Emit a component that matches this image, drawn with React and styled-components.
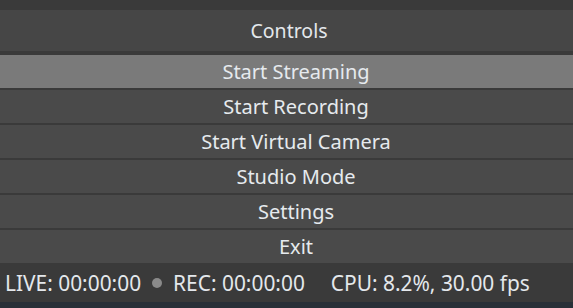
import styled, { createGlobalStyle } from "styled-components";

const GlobalStyle = createGlobalStyle`
  html, body {
    margin: 0;
    padding: 0;
    background: #3a3a3a;
  }
  body {
    font-family: "Noto Sans", "Open Sans", sans-serif;
    color: #e4e8ec;
  }
`;

const Dock = styled.div`
  width: 573px;
  height: 308px;
  display: flex;
  flex-direction: column;
  background: #3a3a3a;
  overflow: hidden;
`;

const TopBand = styled.div`
  height: 10px;
  background: #3a3a3a;
`;

const Title = styled.div`
  height: 41px;
  display: flex;
  align-items: center;
  justify-content: center;
  padding-left: 5px;
  background: #464646;
  font-size: 19.5px;
  margin-bottom: 4px;
`;

const ButtonList = styled.div`
  display: flex;
  flex-direction: column;
  gap: 2px;
`;

const ControlButton = styled.button`
  height: 33px;
  border: 0;
  margin: 0;
  padding: 0 0 0 19px;
  display: flex;
  align-items: center;
  justify-content: center;
  background: ${(p) => (p.$active ? "#7a7a7a" : "#4a4a4a")};
  color: #e6eaee;
  font-family: "Noto Sans", "Open Sans", sans-serif;
  font-size: 20px;
  cursor: pointer;
`;

const StatusBar = styled.div`
  height: 39px;
  display: flex;
  align-items: center;
  padding-left: 5px;
  background: #3a3a3a;
  font-size: 20.9px;
  color: #e4e8ec;
`;

const Dot = styled.span`
  width: 10px;
  height: 10px;
  border-radius: 50%;
  background: #8a8a8a;
  margin: 0 11px;
`;

const Stat = styled.span`
  margin-right: ${(p) => p.$gap || 0}px;
`;

const BottomStrip = styled.div`
  height: 6px;
  background: #293038;
`;

const buttons = [
  "Start Streaming",
  "Start Recording",
  "Start Virtual Camera",
  "Studio Mode",
  "Settings",
  "Exit",
];

export default function App() {
  return (
    <Dock>
      <GlobalStyle />
      <TopBand />
      <Title>Controls</Title>
      <ButtonList>
        {buttons.map((label, index) => (
          <ControlButton key={label} $active={index === 0}>
            {label}
          </ControlButton>
        ))}
      </ButtonList>
      <StatusBar>
        <Stat>LIVE: 00:00:00</Stat>
        <Dot />
        <Stat $gap={26}>REC: 00:00:00</Stat>
        <Stat>CPU: 8.2%, 30.00 fps</Stat>
      </StatusBar>
      <BottomStrip />
    </Dock>
  );
}
